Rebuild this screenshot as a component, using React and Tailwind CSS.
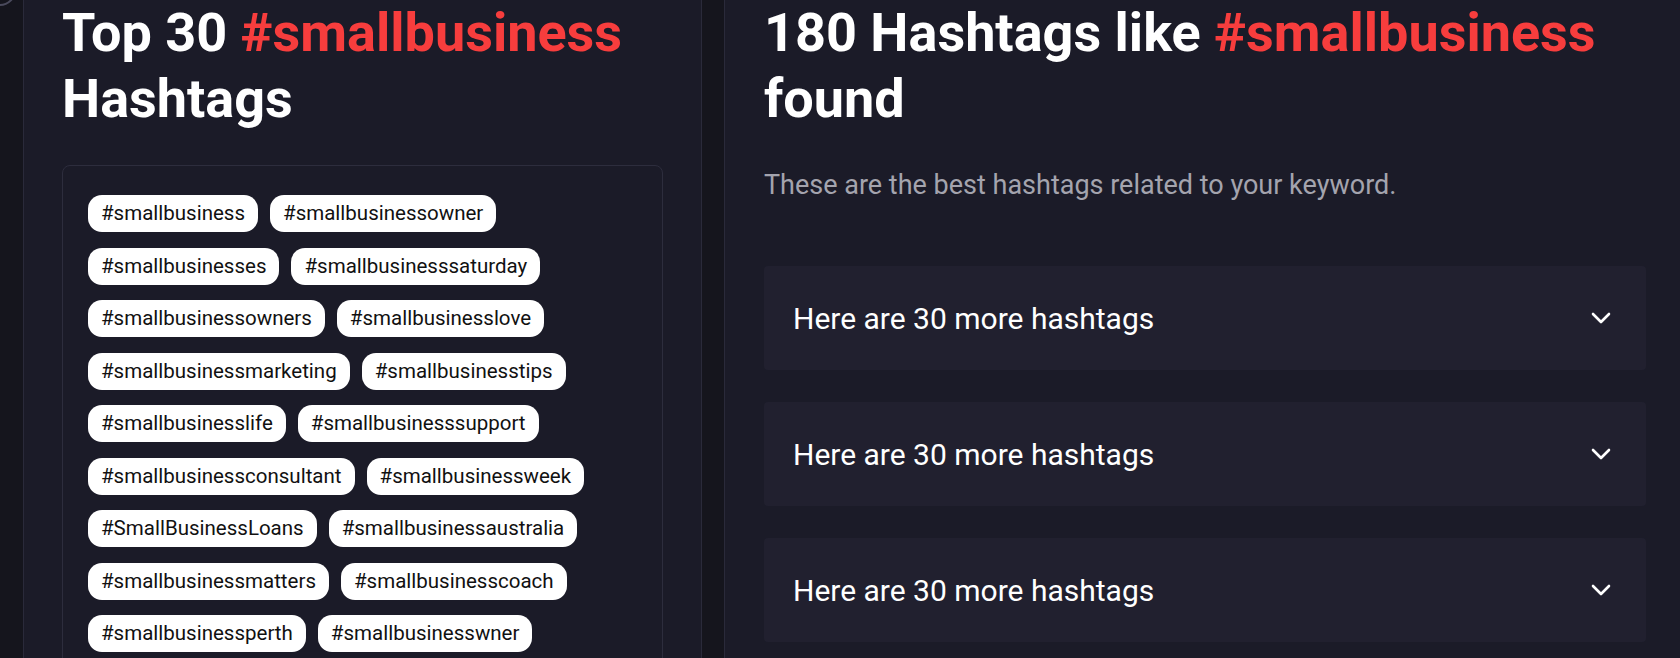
import React from "react";

const tags = [
  "#smallbusiness",
  "#smallbusinessowner",
  "#smallbusinesses",
  "#smallbusinesssaturday",
  "#smallbusinessowners",
  "#smallbusinesslove",
  "#smallbusinessmarketing",
  "#smallbusinesstips",
  "#smallbusinesslife",
  "#smallbusinesssupport",
  "#smallbusinessconsultant",
  "#smallbusinessweek",
  "#SmallBusinessLoans",
  "#smallbusinessaustralia",
  "#smallbusinessmatters",
  "#smallbusinesscoach",
  "#smallbusinessperth",
  "#smallbusinesswner",
];

const Chevron = () => (
  <svg width="20" height="12" viewBox="0 0 20 12" fill="none">
    <path d="M2 2l8 8 8-8" stroke="white" strokeWidth="2.6" strokeLinecap="round" strokeLinejoin="round" />
  </svg>
);

const AccordionRow = ({ label }) => (
  <div className="flex h-[104px] items-center justify-between rounded-sm bg-[#21202f] pl-[29px] pr-[35px]">
    <span className="text-[30px] font-normal text-white">{label}</span>
    <Chevron />
  </div>
);

export default function App() {
  return (
    <div
      className="relative flex h-[658px] w-[1680px] gap-[22px] overflow-hidden bg-[#15151d] pl-[23px]"
      style={{ fontFamily: "Roboto, 'Noto Sans', sans-serif" }}
    >
      <div className="absolute left-[-16px] top-[-26px] h-[32px] w-[32px] rounded-full border-2 border-[#4a4a5c]" />

      <div className="w-[679px] shrink-0 border-x border-[#2a2a3a] bg-[#1b1b28] px-[38px]">
        <h1 className="text-[54px] font-bold leading-[66px] text-white">
          Top 30 <span className="text-[#f73d3d]">#smallbusiness</span> Hashtags
        </h1>
        <div className="mt-[33px] rounded-lg border border-[#2d2d3d] px-[25px] pb-[40px] pt-[29px]">
          <div className="flex flex-wrap gap-x-3 gap-y-[15.5px]">
            {tags.map((tag) => (
              <span
                key={tag}
                className="flex h-[37px] items-center rounded-[14px] bg-white px-[13px] text-[20.5px] text-[#111]"
              >
                {tag}
              </span>
            ))}
          </div>
        </div>
      </div>

      <div className="w-[970px] shrink-0 border-l border-[#2a2a3a] bg-[#1b1b28] pl-[39px]">
        <h1 className="text-[54px] font-bold leading-[66px] text-white">
          180 Hashtags like <span className="text-[#f73d3d]">#smallbusiness</span> found
        </h1>
        <p className="mt-[33px] text-[27px] leading-[40px] text-[#a4a4ae]">
          These are the best hashtags related to your keyword.
        </p>
        <div className="mt-[61px] flex w-[882px] flex-col gap-[32px]">
          <AccordionRow label="Here are 30 more hashtags" />
          <AccordionRow label="Here are 30 more hashtags" />
          <AccordionRow label="Here are 30 more hashtags" />
        </div>
      </div>
    </div>
  );
}
